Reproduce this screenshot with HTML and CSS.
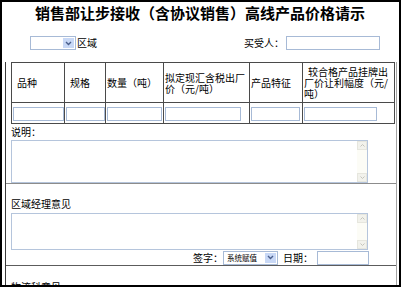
FILE: index.html
```html
<!DOCTYPE html>
<html lang="zh-CN">
<head>
    <meta charset="UTF-8">
    <title>销售部让步接收（含协议销售）高线产品价格请示</title>
    <link rel="stylesheet" href="styles.css">
</head>
<body>
<div class="frame">
    <h1 class="title">销售部让步接收（含协议销售）高线产品价格请示</h1>

    <div class="head-row">
        <div class="field">
            <span class="combo combo-area">
                <span class="combo-text"></span>
                <span class="combo-btn"><svg width="7" height="5" viewBox="0 0 7 5"><path d="M1 1 L3.5 3.5 L6 1" fill="none" stroke="#4a5f8c" stroke-width="1.4"/></svg></span>
            </span>
            <span class="field-after">区域</span>
        </div>
        <div class="field">
            <span>买受人：</span>
            <input type="text" class="box box-buyer">
        </div>
    </div>

    <div class="sheet">
        <div class="sec sec-items">
            <table class="items">
                <colgroup>
                    <col style="width:53px"><col style="width:41px"><col style="width:58px">
                    <col style="width:86px"><col style="width:53px"><col style="width:92px">
                </colgroup>
                <tr class="items-head">
                    <th class="pad">品种</th>
                    <th class="pad">规格</th>
                    <th>数量（吨）</th>
                    <th>拟定现汇含税出厂价（元/吨）</th>
                    <th>产品特征</th>
                    <th class="indent">较合格产品挂牌出厂价让利幅度（元/吨）</th>
                </tr>
                <tr class="items-input">
                    <td><input type="text" class="box w1"></td>
                    <td><input type="text" class="box w2"></td>
                    <td><input type="text" class="box w3"></td>
                    <td><input type="text" class="box w4"></td>
                    <td><input type="text" class="box w5"></td>
                    <td><input type="text" class="box w6"></td>
                </tr>
            </table>
        </div>

        <div class="sec sec-note">
            <div class="label">说明：</div>
            <div class="memo memo-note">
                <textarea></textarea>
                <div class="vscroll">
                    <span class="vscroll-btn"><svg width="5" height="3" viewBox="0 0 5 3"><path d="M0.5 2.5 L2.5 0.5 L4.5 2.5" fill="none" stroke="#c4c4bc" stroke-width="1"/></svg></span>
                    <span class="vscroll-btn"><svg width="5" height="3" viewBox="0 0 5 3"><path d="M0.5 0.5 L2.5 2.5 L4.5 0.5" fill="none" stroke="#c4c4bc" stroke-width="1"/></svg></span>
                </div>
            </div>
        </div>

        <div class="sec sec-region">
            <div class="label">区域经理意见</div>
            <div class="memo memo-region">
                <textarea></textarea>
                <div class="vscroll">
                    <span class="vscroll-btn"><svg width="5" height="3" viewBox="0 0 5 3"><path d="M0.5 2.5 L2.5 0.5 L4.5 2.5" fill="none" stroke="#c4c4bc" stroke-width="1"/></svg></span>
                    <span class="vscroll-btn"><svg width="5" height="3" viewBox="0 0 5 3"><path d="M0.5 0.5 L2.5 2.5 L4.5 0.5" fill="none" stroke="#c4c4bc" stroke-width="1"/></svg></span>
                </div>
            </div>
            <div class="sign-row">
                <span>签字：</span>
                <span class="combo combo-sign">
                    <span class="combo-text">系统赋值</span>
                    <span class="combo-btn"><svg width="7" height="5" viewBox="0 0 7 5"><path d="M1 1 L3.5 3.5 L6 1" fill="none" stroke="#4a5f8c" stroke-width="1.4"/></svg></span>
                </span>
                <span class="date-label">日期：</span>
                <input type="text" class="box box-date">
            </div>
        </div>

        <div class="sec sec-logistics">
            <div class="label">物流科意见</div>
        </div>
    </div>
</div>
</body>
</html>
```

FILE: styles.css
```css
body {
    margin: 0;
    font-family: "Noto Sans CJK SC", sans-serif;
    font-size: 10px;
    color: #000;
    background-color: #fff;
}
.frame {
    width: 401px;
    height: 287px;
    box-sizing: border-box;
    border: 2px solid #000;
    overflow: hidden;
    background: #fff;
}
.title {
    margin: 0;
    padding: 2px 0 0 33px;
    font-size: 15px;
    line-height: 18px;
    font-weight: bold;
    white-space: nowrap;
}
.head-row {
    display: flex;
    justify-content: space-between;
    align-items: center;
    height: 14px;
    margin-top: 14px;
    padding: 0 19px 0 28px;
    line-height: 14px;
}
.field {
    display: flex;
    align-items: center;
}
.field-after {
    margin-left: 1px;
}
.combo {
    display: inline-flex;
    align-items: center;
    height: 14px;
    box-sizing: border-box;
    border: 1px solid #a7bad6;
    background: #fff;
}
.combo-area {
    width: 46px;
}
.combo-sign {
    width: 55px;
}
.combo-text {
    flex: 1;
    padding-left: 3px;
    font-size: 7.5px;
    line-height: 12px;
    white-space: nowrap;
    overflow: hidden;
}
.combo-btn {
    width: 11px;
    height: 10px;
    margin-right: 1px;
    display: flex;
    align-items: center;
    justify-content: center;
    background: #c8d8f6;
}
.box {
    height: 14px;
    box-sizing: border-box;
    border: 1px solid #a7bad6;
    margin: 0;
    padding: 0;
    background: #fff;
    font: inherit;
}
.box-buyer {
    width: 94px;
    margin-left: 2px;
}
.sheet {
    margin: 12px 0 0 3px;
    width: 392px;
    box-sizing: border-box;
    border-left: 1px solid #3a3a3a;
    border-right: 1px solid #a4a4a4;
}
.sec {
    padding-left: 5px;
}
.items {
    width: 383px;
    border-collapse: collapse;
    table-layout: fixed;
}
.items th, .items td {
    border: 1px solid #4a4a4a;
    padding: 0 1px;
    text-align: left;
    font-weight: normal;
    vertical-align: middle;
}
.items-head th {
    height: 39px;
    line-height: 11px;
}
.items th.pad {
    padding-left: 5px;
}
.items th.indent {
    text-indent: 4px;
}
.items-input td {
    padding: 4px 1px 2px;
    vertical-align: top;
}
.items-input .box {
    display: block;
}
.w1 { width: 51px; }
.w2 { width: 39px; }
.w3 { width: 55px; }
.w4 { width: 76px; }
.w5 { width: 49px; }
.w6 { width: 73px; }
.label {
    line-height: 16px;
}
.memo {
    display: flex;
    width: 357px;
    box-sizing: border-box;
    border: 1px solid #b5c5dc;
    background: #fff;
}
.memo textarea {
    flex: 1;
    border: 0;
    margin: 0;
    padding: 0;
    resize: none;
    outline: none;
    font: inherit;
}
.vscroll {
    width: 10px;
    display: flex;
    flex-direction: column;
    justify-content: space-between;
    background: #fcfcf6;
}
.vscroll-btn {
    height: 9px;
    display: flex;
    align-items: center;
    justify-content: center;
    background: #f2f2ec;
    border: 1px solid #e6e6de;
    box-sizing: border-box;
}
.sec-note {
    border-bottom: 1px solid #8c8c8c;
}
.memo-note {
    height: 43px;
}
.sec-region {
    padding-top: 12px;
    border-bottom: 1px solid #5c5c5c;
}
.memo-region {
    height: 37px;
    margin-top: 1px;
}
.sign-row {
    display: flex;
    justify-content: flex-end;
    align-items: center;
    height: 15px;
    padding-right: 27px;
    line-height: 14px;
}
.date-label {
    margin-left: 5px;
}
.box-date {
    width: 52px;
    margin-left: 4px;
}
.sec-logistics {
    padding-top: 13px;
}
```
